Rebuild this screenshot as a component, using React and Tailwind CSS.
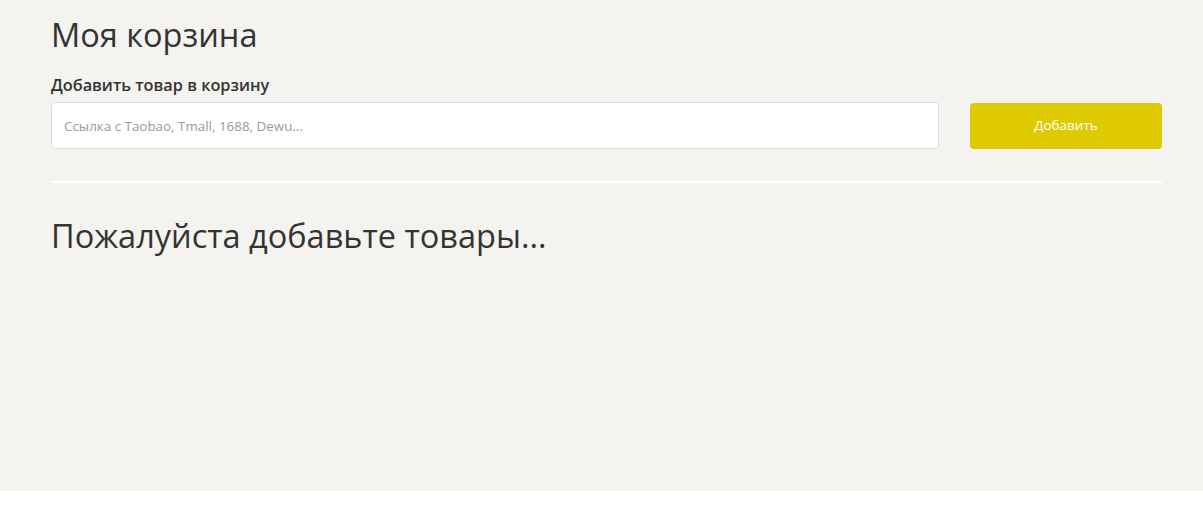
export default function App() {
  return (
    <div className="min-h-screen bg-white font-['Open_Sans',sans-serif]">
      <main className="h-[491px] bg-[#f4f3f0] px-[51px] pt-[12px]">
        <div className="w-[1111px]">
          <h1 className="text-[32.5px] leading-[46px] text-[#333]">Моя корзина</h1>

          <form
            className="mt-[16px]"
            onSubmit={(e) => e.preventDefault()}
          >
            <label className="block text-[16.3px] font-semibold leading-[22px] text-[#333]">
              Добавить товар в корзину
            </label>
            <div className="mt-[6px] flex items-center gap-[31px]">
              <input
                type="text"
                placeholder="Ссылка с Taobao, Tmall, 1688, Dewu..."
                className="h-[47px] flex-1 rounded-[4px] border border-[#dcdcdc] bg-white px-[12px] text-[13.4px] text-[#333] outline-none placeholder:text-[#9a9a9a]"
              />
              <button
                type="submit"
                className="h-[46px] w-[192px] rounded-[4px] bg-[#dfc900] text-[13.5px] text-white"
              >
                Добавить
              </button>
            </div>
          </form>

          <hr className="mt-[32px] border-0 border-t-2 border-white" />

          <h2 className="mt-[30px] text-[32.5px] leading-[46px] text-[#333]">
            Пожалуйста добавьте товары...
          </h2>
        </div>
      </main>
    </div>
  );
}
